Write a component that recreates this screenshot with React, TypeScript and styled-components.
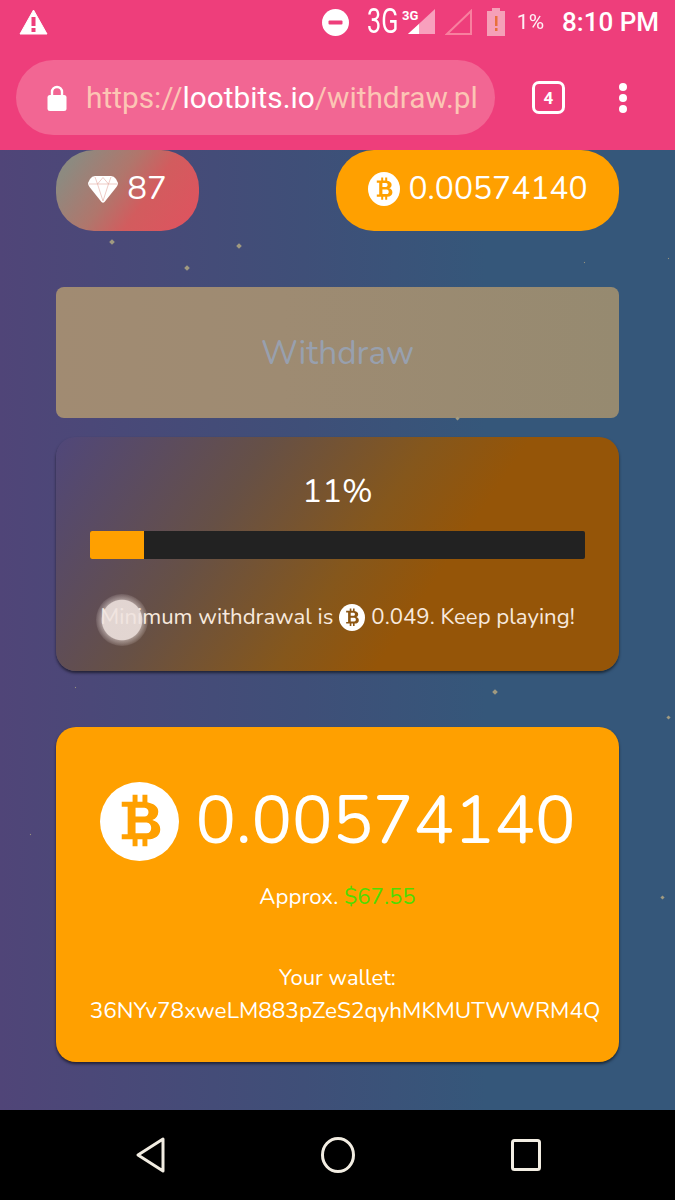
import { useId } from 'react';
import styled, { createGlobalStyle } from 'styled-components';

const GlobalStyle = createGlobalStyle`
  html, body {
    margin: 0;
    padding: 0;
    background: #000;
  }
`;

const Screen = styled.div`
  width: 675px;
  height: 1200px;
  display: flex;
  flex-direction: column;
  overflow: hidden;
  font-family: 'Nunito', 'Lato', 'Noto Sans', sans-serif;
  color: #fff;
`;

const StatusBar = styled.div`
  height: 50px;
  flex: none;
  background: #ee3e7b;
  display: flex;
  align-items: center;
  padding: 0 16px 6px 19px;
  box-sizing: border-box;
  font-family: 'Roboto', sans-serif;
`;

const StatusRight = styled.div`
  margin-left: auto;
  display: flex;
  align-items: center;
`;

const NetworkLabel = styled.span`
  width: 32px;
  margin: 0 3px 0 18px;
  font-size: 35px;
  line-height: 30px;
  font-weight: 400;
  white-space: nowrap;
  transform: scaleX(0.72);
  transform-origin: left center;
`;

const Percent = styled.span`
  font-size: 21px;
  margin-left: 12px;
  opacity: 0.92;
`;

const Clock = styled.span`
  font-size: 26px;
  font-weight: 500;
  margin-left: 18px;
`;

const Toolbar = styled.div`
  height: 100px;
  flex: none;
  background: #ee3e7b;
  display: flex;
  align-items: flex-start;
  padding: 10px 0 0 16px;
  box-sizing: border-box;
  font-family: 'Roboto', sans-serif;
`;

const AddressBar = styled.div`
  width: 479px;
  height: 75px;
  border-radius: 38px;
  background: #f26693;
  display: flex;
  align-items: center;
  padding-left: 31px;
  box-sizing: border-box;
  gap: 19px;
  font-size: 29.8px;
  white-space: nowrap;
  overflow: hidden;
`;

const UrlDim = styled.span`
  color: #fcc5b4;
`;

const UrlStrong = styled.span`
  color: #fff;
`;

const TabCount = styled.div`
  width: 33px;
  height: 33px;
  margin: 21px 0 0 37px;
  border: 3px solid #fff;
  border-radius: 7px;
  box-sizing: border-box;
  display: flex;
  align-items: center;
  justify-content: center;
  font-size: 17px;
  font-weight: 700;
`;

const MenuDots = styled.div`
  margin: 23px 0 0 54px;
  display: flex;
  flex-direction: column;
  gap: 3px;
`;

const MenuDot = styled.span`
  width: 8px;
  height: 8px;
  border-radius: 50%;
  background: #fff;
`;

const Page = styled.main`
  flex: 1;
  position: relative;
  background: linear-gradient(90deg, #504578 0%, #3f4f78 45%, #35577a 72%, #35577a 100%);
  padding: 0 56px;
  display: flex;
  flex-direction: column;
`;

const TopRow = styled.div`
  display: flex;
  justify-content: space-between;
  height: 81px;
  flex: none;
`;

const Pill = styled.div<{ $wide?: boolean }>`
  width: ${p => (p.$wide ? '283px' : '143px')};
  height: 81px;
  border-radius: 38px;
  display: flex;
  align-items: center;
  justify-content: center;
  gap: ${p => (p.$wide ? '9px' : '9px')};
  font-size: ${p => (p.$wide ? '31.8px' : '33px')};
  padding-bottom: 4px;
  box-sizing: border-box;
  background: ${p =>
    p.$wide ? '#ffa000' : 'linear-gradient(125deg, #8d8a80 12%, #b0766c 42%, #d25c5e 62%, #e0525f 100%)'};
`;

const WithdrawButton = styled.div`
  margin-top: 56px;
  height: 131px;
  flex: none;
  border-radius: 8px;
  background: linear-gradient(90deg, #a18b72 0%, #9e8b72 40%, #968a70 100%);
  color: #98a0ae;
  font-size: 33.4px;
  display: flex;
  align-items: center;
  justify-content: center;
`;

const ProgressCard = styled.section`
  margin-top: 19px;
  height: 234px;
  flex: none;
  box-sizing: border-box;
  border-radius: 20px;
  background: linear-gradient(124deg, #50477a 0%, #665046 30%, #85571c 52%, #955508 66%, #955508 100%);
  box-shadow: 0 2px 3px rgba(0, 0, 0, 0.55);
  display: flex;
  flex-direction: column;
  align-items: center;
  padding: 34px 34px 0;
`;

const PercentLabel = styled.div`
  font-size: 33px;
  line-height: 42px;
`;

const Track = styled.div`
  width: 100%;
  height: 28px;
  margin-top: 18px;
  background: #222;
  border-radius: 2px;
  overflow: hidden;
`;

const TrackFill = styled.div`
  height: 100%;
  background: #ffa000;
`;

const MinimumNote = styled.div`
  margin-top: 43px;
  font-size: 22.2px;
  line-height: 30px;
  color: #f7e9de;
  display: flex;
  align-items: center;
  gap: 6px;
  white-space: nowrap;
`;

const WalletCard = styled.section`
  margin-top: 56px;
  height: 335px;
  flex: none;
  box-sizing: border-box;
  border-radius: 20px;
  background: #ffa000;
  box-shadow: 0 2px 3px rgba(0, 0, 0, 0.55);
  display: flex;
  flex-direction: column;
  align-items: center;
  padding-top: 54px;
`;

const BalanceRow = styled.div`
  display: flex;
  align-items: center;
  gap: 17px;
  height: 80px;
  font-size: 67.5px;
`;

const Approx = styled.div`
  margin-top: 21px;
  font-size: 22.2px;
  line-height: 30px;
`;

const UsdValue = styled.span`
  color: #4fdc00;
`;

const WalletLabel = styled.div`
  margin-top: 51px;
  font-size: 22px;
  line-height: 30px;
`;

const WalletAddress = styled.div`
  margin: 3px 0 0 15px;
  font-size: 22.6px;
  line-height: 30px;
  white-space: nowrap;
`;

const Speck = styled.span<{ $size: number }>`
  position: absolute;
  width: ${p => p.$size}px;
  height: ${p => p.$size}px;
  background: #a09a80;
  transform: rotate(45deg);
`;

const TouchDot = styled.div`
  position: absolute;
  left: 96px;
  top: 444px;
  width: 52px;
  height: 52px;
  border-radius: 50%;
  background: radial-gradient(
    circle closest-side,
    rgba(240, 228, 224, 0.9) 0 76%,
    rgba(240, 228, 224, 0.45) 80%,
    rgba(240, 228, 224, 0.1) 100%
  );
`;

const NavBar = styled.nav`
  height: 90px;
  flex: none;
  background: #000;
  display: flex;
  align-items: center;
  justify-content: space-between;
  padding: 0 134px 0 136px;
  box-sizing: border-box;
`;

const specks = [
  { left: 110, top: 90, size: 4 },
  { left: 237, top: 94, size: 4 },
  { left: 185, top: 116, size: 4 },
  { left: 456, top: 267, size: 3 },
  { left: 493, top: 540, size: 4 },
  { left: 667, top: 566, size: 3 },
  { left: 661, top: 746, size: 3 },
  { left: 584, top: 112, size: 1 },
  { left: 668, top: 108, size: 1 },
  { left: 30, top: 684, size: 1 },
  { left: 75, top: 537, size: 1 },
];

const WarningIcon = () => (
  <svg width="29" height="26" viewBox="0 0 29 26">
    <path d="M14.5 1 L28 25 H1 Z" fill="#fff" stroke="#fff" strokeLinejoin="round" />
    <rect x="12.5" y="8" width="4" height="9" fill="#ee3e7b" />
    <rect x="12.5" y="19" width="4" height="4" fill="#ee3e7b" />
  </svg>
);

const DndIcon = () => (
  <svg width="27" height="27" viewBox="0 0 27 27">
    <circle cx="13.5" cy="13.5" r="13.5" fill="#fff" />
    <rect x="6.5" y="11.5" width="14" height="4" rx="1" fill="#ee3e7b" />
  </svg>
);

const SignalIcon = () => (
  <svg width="33" height="26" viewBox="0 0 33 26">
    <text x="0" y="11" fill="#fff" fontSize="13" fontWeight="700" fontFamily="Roboto, sans-serif">
      3G
    </text>
    <path d="M6 25 L33 0 V25 Z" fill="#f8a0bd" />
    <path d="M6 25 L17 15 V25 Z" fill="#fff" />
  </svg>
);

const EmptySignalIcon = () => (
  <svg width="27" height="26" viewBox="0 0 27 26" style={{ marginLeft: 10 }}>
    <path d="M2 25 L26 2 V25 Z" fill="none" stroke="#f8809f" strokeWidth="2" />
  </svg>
);

const BatteryIcon = () => (
  <svg width="18" height="28" viewBox="0 0 18 28" style={{ marginLeft: 15 }}>
    <path d="M5 0 H13 V3 H18 V28 H0 V3 H5 Z" fill="#f5a0b8" />
    <rect x="8" y="8" width="2.5" height="10" fill="#e8703c" />
    <rect x="8" y="20" width="2.5" height="3" fill="#e8703c" />
  </svg>
);

const LockIcon = () => (
  <svg width="20" height="26" viewBox="0 0 20 26">
    <path d="M5 11 V7 a5 5 0 0 1 10 0 V11" fill="none" stroke="#fff" strokeWidth="2.4" />
    <rect x="0.5" y="10" width="19" height="16" rx="2.5" fill="#fff" />
  </svg>
);

const GemIcon = () => (
  <svg width="30" height="28" viewBox="0 0 30 28">
    <path d="M7 1 H23 Q26 1 28 4 L30 8 Q30 10 28.5 12 L16.5 27 Q15 28.5 13.5 27 L1.5 12 Q0 10 0 8 L2 4 Q4 1 7 1 Z" fill="#fff" />
    <path d="M1 9 H29 M7 2 L9.5 9 L15 26 L20.5 9 L23 2 M9.5 9 L15 2.5 L20.5 9" fill="none" stroke="#e2a8a0" strokeWidth="0.6" />
  </svg>
);

// bitcoin mark: white disc, upright B cut out so the panel colour shows through
const BitcoinIcon = ({ width, height }: { width: number; height: number }) => {
  const maskId = useId();
  return (
    <svg width={width} height={height} viewBox="0 0 80 80" preserveAspectRatio="none" style={{ flex: 'none' }}>
      <mask id={maskId}>
        <circle cx="40" cy="40" r="40" fill="#fff" />
        <path
          fillRule="evenodd"
          fill="#000"
          d="M22 20 H33 V13 H38 V20 H43 V13 H48 V20.5 C55 22 59 25 59 30 C59 34 57 37 53 38.5 C58 40 61 43 61 48 C61 54 56 58 48 58 V65 H43 V58 H38 V65 H33 V58 H22 V53 H28 V25 H22 Z M36 26 V35 H45 C50.5 35 50.5 26 45 26 Z M36 41 V52 H47 C53.5 52 53.5 41 47 41 Z"
        />
      </mask>
      <rect width="80" height="80" fill="#fff" mask={`url(#${maskId})`} />
    </svg>
  );
};

const BackIcon = () => (
  <svg width="29" height="36" viewBox="0 0 29 36">
    <path d="M27 2 V34 L2 18 Z" fill="none" stroke="#f2ede2" strokeWidth="3" strokeLinejoin="round" />
  </svg>
);

const HomeIcon = () => (
  <svg width="34" height="36" viewBox="0 0 34 36">
    <ellipse cx="17" cy="18" rx="15.5" ry="16.5" fill="none" stroke="#f2ede2" strokeWidth="3" />
  </svg>
);

const RecentsIcon = () => (
  <svg width="30" height="32" viewBox="0 0 30 32">
    <rect x="1.5" y="1.5" width="27" height="29" rx="2" fill="none" stroke="#f2ede2" strokeWidth="3" />
  </svg>
);

export default function App() {
  const progress = 11;

  return (
    <>
      <GlobalStyle />
      <Screen>
        <StatusBar>
          <WarningIcon />
          <StatusRight>
            <DndIcon />
            <NetworkLabel>3G</NetworkLabel>
            <SignalIcon />
            <EmptySignalIcon />
            <BatteryIcon />
            <Percent>1%</Percent>
            <Clock>8:10 PM</Clock>
          </StatusRight>
        </StatusBar>
        <Toolbar>
          <AddressBar>
            <LockIcon />
            <div>
              <UrlDim>https://</UrlDim>
              <UrlStrong>lootbits.io</UrlStrong>
              <UrlDim>/withdraw.pl</UrlDim>
            </div>
          </AddressBar>
          <TabCount>4</TabCount>
          <MenuDots>
            <MenuDot />
            <MenuDot />
            <MenuDot />
          </MenuDots>
        </Toolbar>
        <Page>
          {specks.map(s => (
            <Speck key={`${s.left}-${s.top}`} $size={s.size} style={{ left: s.left, top: s.top }} />
          ))}
          <TopRow>
            <Pill>
              <GemIcon />
              <span>87</span>
            </Pill>
            <Pill $wide>
              <BitcoinIcon width={32} height={34} />
              <span>0.00574140</span>
            </Pill>
          </TopRow>
          <WithdrawButton>Withdraw</WithdrawButton>
          <ProgressCard>
            <PercentLabel>{progress}%</PercentLabel>
            <Track>
              <TrackFill style={{ width: `${progress}%` }} />
            </Track>
            <MinimumNote>
              <span>Minimum withdrawal is</span>
              <BitcoinIcon width={26} height={27} />
              <span>0.049. Keep playing!</span>
            </MinimumNote>
          </ProgressCard>
          <WalletCard>
            <BalanceRow>
              <BitcoinIcon width={79} height={79} />
              <span>0.00574140</span>
            </BalanceRow>
            <Approx>
              Approx. <UsdValue>$67.55</UsdValue>
            </Approx>
            <WalletLabel>Your wallet:</WalletLabel>
            <WalletAddress>36NYv78xweLM883pZeS2qyhMKMUTWWRM4Q</WalletAddress>
          </WalletCard>
          <TouchDot />
        </Page>
        <NavBar>
          <BackIcon />
          <HomeIcon />
          <RecentsIcon />
        </NavBar>
      </Screen>
    </>
  );
}
